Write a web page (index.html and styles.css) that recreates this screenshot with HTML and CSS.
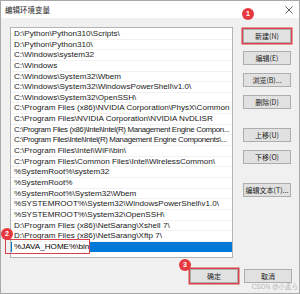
FILE: index.html
```html
<!DOCTYPE html>
<html lang="zh">
<head>
  <meta charset="UTF-8">
  <title>编辑环境变量</title>
  <link rel="stylesheet" href="styles.css">
</head>
<body>
  <div class="window">
    <div class="titlebar">
      <span class="title">编辑环境变量</span>
      <svg class="close" width="8" height="8" viewBox="0 0 8 8">
        <path d="M0.5 0.5 L7.5 7.5 M7.5 0.5 L0.5 7.5" stroke="#333" stroke-width="0.8" fill="none"/>
      </svg>
    </div>

    <div class="content">
      <div class="list">
        <div class="row">D:\Python\Python310\Scripts\</div>
        <div class="row">D:\Python\Python310\</div>
        <div class="row">C:\Windows\system32</div>
        <div class="row">C:\Windows</div>
        <div class="row">C:\Windows\System32\Wbem</div>
        <div class="row">C:\Windows\System32\WindowsPowerShell\v1.0\</div>
        <div class="row">C:\Windows\System32\OpenSSH\</div>
        <div class="row">C:\Program Files (x86)\NVIDIA Corporation\PhysX\Common</div>
        <div class="row">C:\Program Files\NVIDIA Corporation\NVIDIA NvDLISR</div>
        <div class="row long">C:\Program Files (x86)\Intel\Intel(R) Management Engine Compon...</div>
        <div class="row long">C:\Program Files\Intel\Intel(R) Management Engine Components\...</div>
        <div class="row">C:\Program Files\Intel\WiFi\bin\</div>
        <div class="row">C:\Program Files\Common Files\Intel\WirelessCommon\</div>
        <div class="row">%SystemRoot%\system32</div>
        <div class="row">%SystemRoot%</div>
        <div class="row">%SystemRoot%\System32\Wbem</div>
        <div class="row">%SYSTEMROOT%\System32\WindowsPowerShell\v1.0\</div>
        <div class="row">%SYSTEMROOT%\System32\OpenSSH\</div>
        <div class="row">D:\Program Files (x86)\NetSarang\Xshell 7\</div>
        <div class="row">D:\Program Files (x86)\NetSarang\Xftp 7\</div>
        <div class="row selected">
          <span class="edit">%JAVA_HOME%\bin</span>
        </div>
      </div>

      <div class="side">
        <button class="btn marked">新建(N)</button>
        <button class="btn">编辑(E)</button>
        <button class="btn">浏览(B)...</button>
        <button class="btn">删除(D)</button>
        <button class="btn far">上移(U)</button>
        <button class="btn">下移(O)</button>
        <button class="btn far">编辑文本(T)...</button>
      </div>
    </div>

    <div class="footer">
      <button class="btn marked">确定</button>
      <button class="btn">取消</button>
    </div>

    <div class="edit-mark"></div>
    <span class="badge b1">1</span>
    <span class="badge b2">2</span>
    <span class="badge b3">3</span>
    <span class="watermark">CSDN @小孟ら</span>
  </div>
</body>
</html>
```

FILE: styles.css
```css
* {
  box-sizing: border-box;
}

body {
  margin: 0;
  font-family: 'Liberation Sans', 'Noto Sans CJK SC', sans-serif;
  color: #000;
  background: #f0f0f0;
}

.window {
  position: relative;
  width: 300px;
  height: 294px;
  background: #f0f0f0;
  border: 1px solid #a8a8a8;
  overflow: hidden;
}

.titlebar {
  height: 17px;
  background: #fff;
  display: flex;
  align-items: center;
  justify-content: space-between;
  padding: 0 6px 0 4px;
}

.title {
  font-family: 'Noto Sans CJK SC', sans-serif;
  font-size: 7.5px;
  color: #222;
}

.content {
  display: flex;
  padding: 9px 0 0 9px;
}

.list {
  width: 223px;
  height: 231px;
  background: #fff;
  border: 1px solid #b4b4b4;
  padding-top: 1px;
}

.row {
  height: 10.65px;
  line-height: 10px;
  padding-left: 3px;
  font-size: 8.1px;
  color: #1a1a1a;
  white-space: nowrap;
  overflow: hidden;
  border-bottom: 1px solid #f2f2f2;
}

.row.long {
  font-size: 7.9px;
  letter-spacing: -0.35px;
}

.row.selected {
  background: #0078d7;
  padding-left: 1px;
  border-bottom: none;
}

.edit {
  display: inline-block;
  width: 77px;
  height: 10.65px;
  background: #fff;
  padding-left: 2px;
  color: #000;
}

.side {
  display: flex;
  flex-direction: column;
  margin-left: 10px;
  padding-top: 2px;
  gap: 8px;
}

.btn {
  width: 48px;
  height: 14px;
  padding: 0;
  background: #e1e1e1;
  border: 1px solid #adadad;
  font-family: 'Noto Sans CJK SC', sans-serif;
  font-size: 7px;
  color: #222;
  line-height: 12px;
}

.side .far {
  margin-top: 11px;
}

.marked {
  box-shadow: 0 0 0 1.5px #d8434b;
}

.footer {
  display: flex;
  justify-content: flex-end;
  gap: 6px;
  padding: 11px 7px 0 0;
}

.edit-mark {
  position: absolute;
  left: 4px;
  top: 238px;
  width: 85px;
  height: 15px;
  border: 1.5px solid #d8434b;
}

.badge {
  position: absolute;
  width: 12px;
  height: 12px;
  border-radius: 50%;
  background: #e5393f;
  color: #fff;
  font-family: 'Liberation Sans', sans-serif;
  font-weight: bold;
  font-size: 7px;
  line-height: 12px;
  text-align: center;
}

.b1 {
  left: 241px;
  top: 7px;
}

.b2 {
  left: 0;
  top: 227px;
}

.b3 {
  left: 178px;
  top: 258px;
}

.watermark {
  position: absolute;
  right: 1px;
  bottom: 2px;
  font-family: 'Liberation Sans', 'Noto Sans CJK SC', sans-serif;
  font-size: 6.5px;
  color: #b8b8b8;
}
```
